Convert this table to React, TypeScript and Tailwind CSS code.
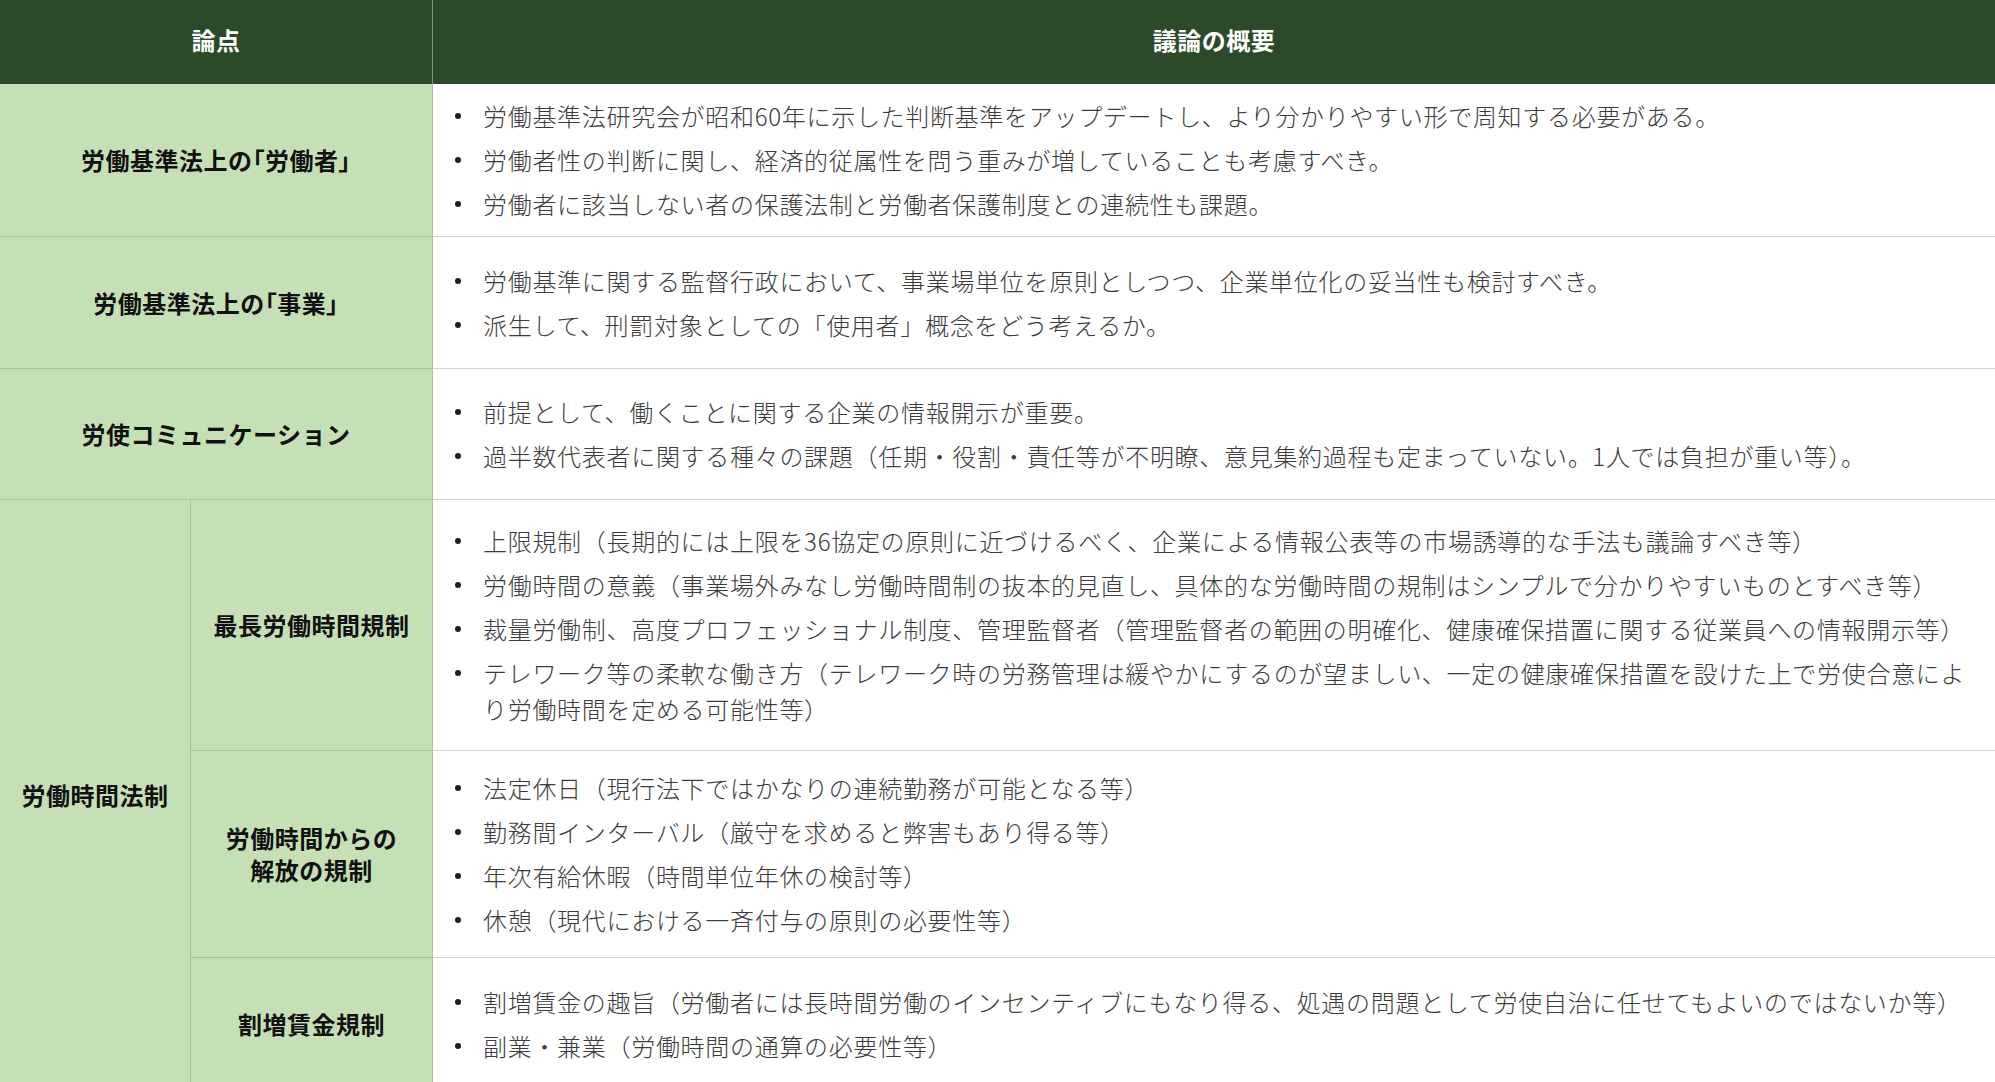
import React from 'react';

type Item = string;

const font = "font-['Noto_Sans_CJK_JP','Noto_Sans',sans-serif]";

function Bullets({ items }: { items: Item[] }) {
  return (
    <ul className="flex flex-col gap-[8px]">
      {items.map((t, i) => (
        <li key={i} className="flex items-start">
          <span className="flex h-[36px] w-[6px] shrink-0 items-center">
            <span className="block h-[6px] w-[6px] rounded-full bg-[#1e1e1e]" />
          </span>
          <span className="ml-[22px] text-[24px] leading-[36px] tracking-[0.7px] font-light text-[#3c3c3c]">
            {t}
          </span>
        </li>
      ))}
    </ul>
  );
}

function Label({ children, className = '' }: { children: React.ReactNode; className?: string }) {
  return (
    <div
      className={`flex items-center justify-center bg-[#c5e0b4] border-b border-r border-[#a9c29c] text-center text-[24px] leading-[32px] tracking-[0.5px] font-bold text-[#111] ${className}`}
    >
      {children}
    </div>
  );
}

function Content({ items }: { items: Item[] }) {
  return (
    <div className="flex items-center bg-white border-b border-[#d2d2d2] pl-[22px] pr-[24px]">
      <Bullets items={items} />
    </div>
  );
}

const Br = ({ c }: { c: string }) => (
  <span className="[font-feature-settings:'palt']">{c}</span>
);

export default function App() {
  return (
    <div className={`h-[1082px] w-[1995px] overflow-hidden bg-white ${font}`}>
      <div className="grid grid-cols-[191px_242px_1fr] grid-rows-[84px_153px_132px_131px_251px_207px_132px]">
        <div className="col-span-2 flex items-center justify-center pb-[4px] bg-[#2b4a29] border-r border-[#7f8f7c] text-[24px] font-bold tracking-[0.5px] text-white">
          論点
        </div>
        <div className="flex items-center justify-center pb-[4px] bg-[#2b4a29] text-[24px] font-bold tracking-[0.5px] text-white">
          議論の概要
        </div>

        <Label className="col-span-2">
          <span>
            労働基準法上の<Br c="「" />労働者<Br c="」" />
          </span>
        </Label>
        <Content
          items={[
            '労働基準法研究会が昭和60年に示した判断基準をアップデートし、より分かりやすい形で周知する必要がある。',
            '労働者性の判断に関し、経済的従属性を問う重みが増していることも考慮すべき。',
            '労働者に該当しない者の保護法制と労働者保護制度との連続性も課題。',
          ]}
        />

        <Label className="col-span-2">
          <span>
            労働基準法上の<Br c="「" />事業<Br c="」" />
          </span>
        </Label>
        <Content
          items={[
            '労働基準に関する監督行政において、事業場単位を原則としつつ、企業単位化の妥当性も検討すべき。',
            '派生して、刑罰対象としての「使用者」概念をどう考えるか。',
          ]}
        />

        <Label className="col-span-2">労使コミュニケーション</Label>
        <Content
          items={[
            '前提として、働くことに関する企業の情報開示が重要。',
            '過半数代表者に関する種々の課題（任期・役割・責任等が不明瞭、意見集約過程も定まっていない。1人では負担が重い等）。',
          ]}
        />

        <Label className="row-span-3">労働時間法制</Label>
        <Label>最長労働時間規制</Label>
        <Content
          items={[
            '上限規制（長期的には上限を36協定の原則に近づけるべく、企業による情報公表等の市場誘導的な手法も議論すべき等）',
            '労働時間の意義（事業場外みなし労働時間制の抜本的見直し、具体的な労働時間の規制はシンプルで分かりやすいものとすべき等）',
            '裁量労働制、高度プロフェッショナル制度、管理監督者（管理監督者の範囲の明確化、健康確保措置に関する従業員への情報開示等）',
            'テレワーク等の柔軟な働き方（テレワーク時の労務管理は緩やかにするのが望ましい、一定の健康確保措置を設けた上で労使合意により労働時間を定める可能性等）',
          ]}
        />

        <Label>
          <span>
            労働時間からの
            <br />
            解放の規制
          </span>
        </Label>
        <Content
          items={[
            '法定休日（現行法下ではかなりの連続勤務が可能となる等）',
            '勤務間インターバル（厳守を求めると弊害もあり得る等）',
            '年次有給休暇（時間単位年休の検討等）',
            '休憩（現代における一斉付与の原則の必要性等）',
          ]}
        />

        <Label>割増賃金規制</Label>
        <Content
          items={[
            '割増賃金の趣旨（労働者には長時間労働のインセンティブにもなり得る、処遇の問題として労使自治に任せてもよいのではないか等）',
            '副業・兼業（労働時間の通算の必要性等）',
          ]}
        />
      </div>
    </div>
  );
}
